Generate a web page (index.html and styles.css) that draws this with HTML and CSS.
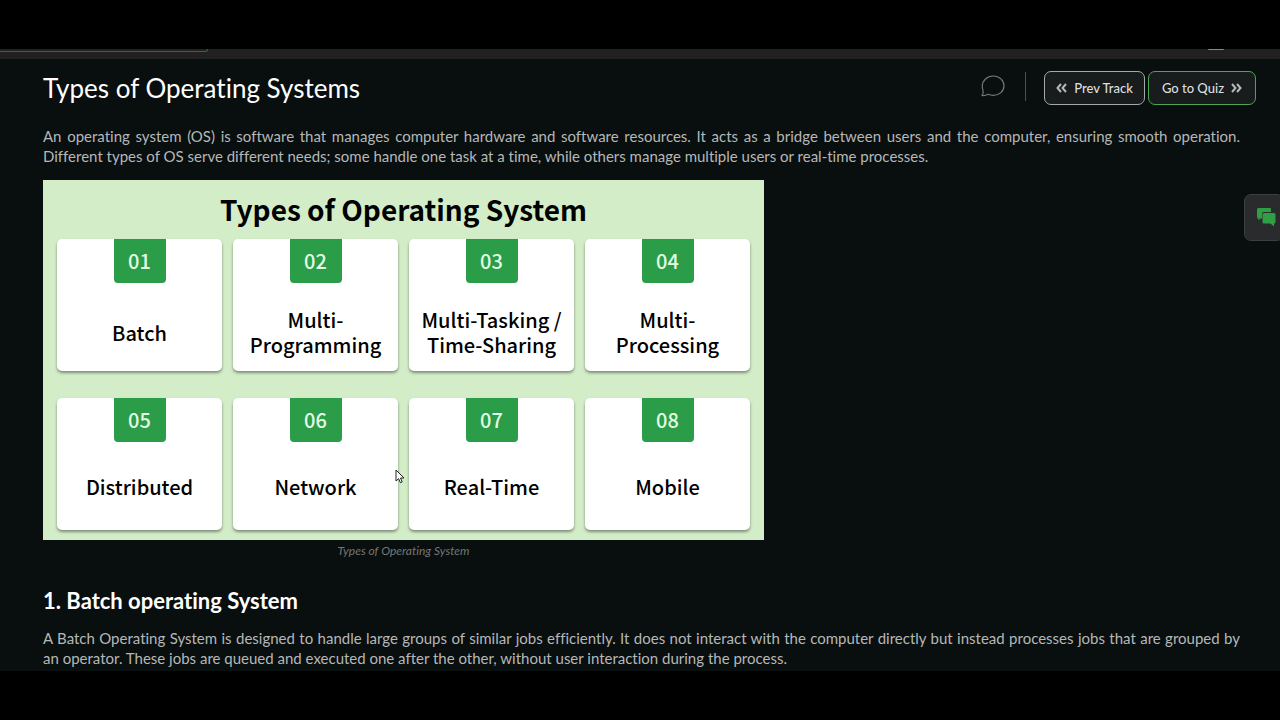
FILE: index.html
```html
<!DOCTYPE html>
<html lang="en">
<head>
	<meta charset="utf-8">
	<meta name="viewport" content="width=device-width, initial-scale=1.0">
	<title>Types of Operating Systems</title>
	<link rel="stylesheet" href="styles.css">
</head>
<body>
	<div class="screen">
		<div class="topbar">
			<div class="tab"></div>
			<div class="avatar"></div>
		</div>

		<main class="article">
			<header class="head">
				<h1>Types of Operating Systems</h1>
				<div class="actions">
					<button class="comment" type="button" aria-label="Comments">
						<svg width="24" height="22" viewBox="0 0 24 22" fill="none" stroke="#74787a" stroke-width="1.2" stroke-linejoin="round"><path d="M1 20.5C2.2 18.8 2.6 17 1.9 15A10.2 9.8 0 0 1 1.3 11C1.3 5.5 6.1 1 12.2 1S23 5.4 23 10.8 18.2 20.4 12.2 20.4C10.300 20.400 8.800 20.100 7.200 19.300C5.500 20.200 3.500 20.700 1 20.500Z"/></svg>
					</button>
					<span class="line"></span>
					<button class="btn" type="button">
						<svg width="11" height="10" viewBox="0 0 11 10" fill="none" stroke="#b4b9ba" stroke-width="2"><path d="M5 1L1.500 5L5 9M10 1L6.500 5L10 9"/></svg>
						Prev Track
					</button>
					<button class="btn green" type="button">
						Go to Quiz
						<svg width="11" height="10" viewBox="0 0 11 10" fill="none" stroke="#b4b9ba" stroke-width="2"><path d="M1 1L4.500 5L1 9M6 1L9.500 5L6 9"/></svg>
					</button>
				</div>
			</header>

			<p>An operating system (OS) is software that manages computer hardware and software resources. It acts as a bridge between users and the computer, ensuring smooth operation. Different types of OS serve different needs; some handle one task at a time, while others manage multiple users or real-time processes.</p>

			<figure>
				<div class="chart">
					<h3>Types of Operating System</h3>
					<ul class="cards">
						<li><span class="num">01</span><span class="name">Batch</span></li>
						<li><span class="num">02</span><span class="name">Multi-<br>Programming</span></li>
						<li><span class="num">03</span><span class="name">Multi-Tasking /<br>Time-Sharing</span></li>
						<li><span class="num">04</span><span class="name">Multi-<br>Processing</span></li>
						<li class="low"><span class="num">05</span><span class="name">Distributed</span></li>
						<li class="low"><span class="num">06</span><span class="name">Network</span></li>
						<li class="low"><span class="num">07</span><span class="name">Real-Time</span></li>
						<li class="low"><span class="num">08</span><span class="name">Mobile</span></li>
					</ul>
				</div>
				<figcaption>Types of Operating System</figcaption>
				<svg class="cursor" width="10" height="16" viewBox="0 0 10 16"><path d="M1 1V12L3.600 9.700L5.400 13.700L7.200 12.900L5.500 9H9Z" fill="#fff" stroke="#222" stroke-width="1"/></svg>
			</figure>

			<h2>1. Batch operating System</h2>
			<p>A Batch Operating System is designed to handle large groups of similar jobs efficiently. It does not interact with the computer directly but instead processes jobs that are grouped by an operator. These jobs are queued and executed one after the other, without user interaction during the process.</p>
		</main>

		<button class="chat" type="button" aria-label="Chat">
			<svg width="19" height="19" viewBox="0 0 19 19" fill="#2f9e44"><path d="M1.500 0H13Q14 0 14 1V4H7Q5 4 5 6V10.500H3.500L1.500 12.500V10.500Q0 10.500 0 9V1.500Q0 0 1.500 0Z"/><path d="M7 5H17Q18.500 5 18.500 6.500V14Q18.500 15.500 17 15.500V18.500L13.500 15.500H7Q5.500 15.500 5.500 14V6.500Q5.500 5 7 5Z"/></svg>
		</button>
	</div>
</body>
</html>
```
FILE: styles.css
```css
*{
	box-sizing: border-box;
}
body, h1, h2, h3, p, ul, figure{
	margin: 0;
	padding: 0;
}
ul{
	list-style: none;
}
body{
	height: 100vh;
	padding: 49px 0;
	background: #000;
	color: #b5b8b8;
	font: 15px/20px Lato, sans-serif;
	font-variant-ligatures: none;
}
.screen{
	position: relative;
	height: 100%;
	overflow: hidden;
	background: #090e0e;
}

/* top bar */
.topbar{
	display: flex;
	justify-content: space-between;
	height: 10px;
	padding-right: 56px;
	background: #212121;
}
.tab{
	width: 208px;
	height: 3px;
	border: solid #2f6a3a;
	border-width: 0 1px 1px 0;
	border-radius: 0 0 6px 0;
}
.avatar{
	width: 16px;
	height: 1px;
	background: #888;
	border-radius: 0 0 8px 8px;
}

/* article */
.article{
	padding: 12px 40px 0 43px;
}
.head{
	display: flex;
	align-items: center;
	justify-content: space-between;
	height: 34px;
	margin: 0 -16px 21px 0;
}
.head h1{
	color: #fff;
	font-size: 26px;
	line-height: 34px;
	font-weight: 400;
}
.actions{
	display: flex;
	align-items: center;
}
.comment{
	display: flex;
	margin: 0 20px 4px 0;
	padding: 0;
	border: 0;
	background: none;
}
.line{
	width: 1px;
	height: 29px;
	margin: 0 18px 4px 0;
	background: #4b4f4f;
}
.btn{
	display: flex;
	align-items: center;
	justify-content: center;
	gap: 7px;
	width: 101px;
	height: 34px;
	margin-right: 3px;
	padding: 0;
	border: 1px solid #a5a8a8;
	border-radius: 7px;
	background: #181c1d;
	color: #dcdfdf;
	font: 500 13px/20px Lato, sans-serif;
}
.btn.green{
	width: 108px;
	margin-right: 0;
	border-color: #4aa650;
}
.article p{
	text-align: justify;
}

/* figure */
figure{
	position: relative;
	width: 721px;
	max-width: 100%;
	margin: 14px 0 27px;
}
.chart{
	padding: 9px 14px 10px;
	background: #d2edc8;
	color: #000;
	font-family: "Noto Sans CJK SC", sans-serif;
}
.chart h3{
	margin-bottom: 10px;
	font-size: 28px;
	line-height: 40px;
	text-align: center;
}
.cards{
	display: grid;
	grid-template-columns: repeat(4, 1fr);
	gap: 27px 11px;
}
.cards li{
	display: flex;
	flex-direction: column;
	align-items: center;
	height: 132px;
	border-radius: 5px;
	background: #fff;
	box-shadow: 0 2px 3px rgba(0, 0, 0, .4);
}
.num{
	width: 52px;
	height: 44px;
	border-radius: 0 0 4px 4px;
	background: #2b9c47;
	color: #e2fbe4;
	font-size: 20px;
	line-height: 44px;
	font-weight: 500;
	text-align: center;
}
.name{
	display: flex;
	flex: 1;
	align-items: center;
	padding-top: 10px;
	font-size: 20px;
	line-height: 25px;
	font-weight: 500;
	text-align: center;
}
.low .name{
	padding-top: 0;
}
figcaption{
	color: #737777;
	font-size: 12px;
	line-height: 22px;
	font-style: italic;
	text-align: center;
}
.cursor{
	position: absolute;
	top: 289px;
	left: 352px;
}

h2{
	margin-bottom: 15px;
	color: #fff;
	font-size: 22px;
	line-height: 24px;
	font-weight: 700;
}

/* chat button */
.chat{
	position: absolute;
	top: 145px;
	right: -4px;
	width: 40px;
	height: 47px;
	padding: 3px 0 0 12px;
	border: 1px solid #3b3f3f;
	border-radius: 7px;
	background: #2a2b2c;
	text-align: left;
}
```
